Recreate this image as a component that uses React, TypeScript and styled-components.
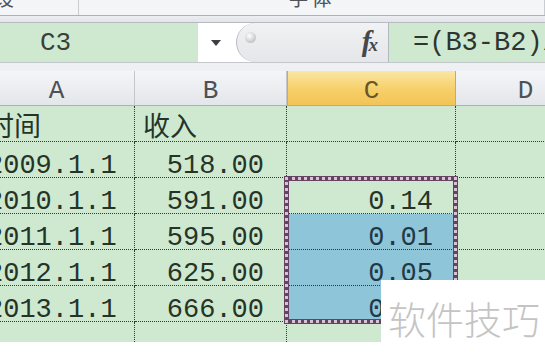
import { FC, Fragment } from "react"
import styled, { createGlobalStyle } from "styled-components"

const GlobalStyle = createGlobalStyle`
  html, body {
    margin: 0;
    padding: 0;
    background: #ffffff;
    overflow: hidden;
  }
  body {
    font-family: "Liberation Mono", "Noto Sans CJK SC", monospace;
  }
`

const GREEN = "#cfe9d1"
const BLUE = "#8fc5d9"
const GRID_LINE = "#2f3a33"
const MONO = `"Liberation Mono", "Noto Sans CJK SC", monospace`

const Page = styled.div`
  position: relative;
  width: 545px;
  height: 361px;
  overflow: hidden;
  background: #ffffff;
`

const Ribbon = styled.div`
  display: flex;
  height: 15px;
  background: #f4f5f7;
  border-bottom: 1px solid #aeb2b8;
  overflow: hidden;
`

const RibbonGroup = styled.div<{ $width?: number; $align?: string }>`
  display: flex;
  align-items: flex-end;
  justify-content: ${(p) => p.$align || "center"};
  width: ${(p) => (p.$width ? `${p.$width}px` : "auto")};
  flex: ${(p) => (p.$width ? "none" : "1")};
  border-right: 1px solid #c9ccd1;
  padding-bottom: 7px;
  font-family: "Noto Sans CJK SC", sans-serif;
  font-size: 20px;
  line-height: 20px;
  color: #4f5358;
`

const RibbonLabel = styled.span<{ $shift?: number }>`
  margin-left: ${(p) => p.$shift || 0}px;
  letter-spacing: 3px;
`

const Band = styled.div`
  height: 6px;
  background: linear-gradient(#eceef1, #e2e5e9);
  border-bottom: 1px solid #b7bbc1;
`

const FormulaBar = styled.div`
  display: flex;
  height: 39px;
  border-bottom: 1px solid #c4c8cd;
`

const NameBox = styled.div`
  display: flex;
  align-items: center;
  width: 198px;
  padding-left: 40px;
  box-sizing: border-box;
  background: ${GREEN};
  font-family: ${MONO};
  font-size: 26px;
  color: #3a3f3b;
`

const DropZone = styled.div`
  display: flex;
  align-items: center;
  justify-content: center;
  width: 38px;
  background: #ffffff;
`

const Caret = styled.div`
  width: 0;
  height: 0;
  border-left: 5px solid transparent;
  border-right: 5px solid transparent;
  border-top: 6px solid #3b3f44;
  margin-right: 2px;
`

const FxPill = styled.div`
  position: relative;
  display: flex;
  align-items: center;
  justify-content: flex-end;
  width: 152px;
  padding-right: 10px;
  box-sizing: border-box;
  background: linear-gradient(#f1f2f4, #e4e6e9);
  border-left: 1px solid #b9bdc3;
  border-radius: 22px 0 0 22px;
`

const Knob = styled.div`
  position: absolute;
  left: 8px;
  top: 9px;
  width: 11px;
  height: 11px;
  border-radius: 50%;
  background: radial-gradient(circle at 40% 35%, #ffffff, #c3c6ca 70%);
`

const FxLabel = styled.span`
  font-family: "Liberation Serif", serif;
  font-style: italic;
  font-weight: bold;
  font-size: 29px;
  line-height: 29px;
  color: #44474c;
  & small {
    font-size: 19px;
    margin-left: -3px;
  }
`

const FormulaText = styled.div`
  flex: 1;
  display: flex;
  align-items: center;
  padding-left: 24px;
  background: ${GREEN};
  border-left: 1px solid #b3b8be;
  font-family: ${MONO};
  font-size: 27px;
  color: #2e3430;
  white-space: nowrap;
  overflow: hidden;
`

const Gap = styled.div`
  height: 8px;
  background: #eef0f3;
`

const Sheet = styled.div`
  position: relative;
  height: 271px;
  overflow: hidden;
`

const Grid = styled.div`
  display: grid;
  grid-template-columns: 156px 152px 169px 140px;
  grid-template-rows: 35px;
  grid-auto-rows: 36px;
  margin-left: -21px;
`

const HeadCell = styled.div<{ $active?: boolean }>`
  display: flex;
  align-items: center;
  justify-content: center;
  padding-top: 5px;
  box-sizing: border-box;
  font-family: ${MONO};
  font-size: 26px;
  color: ${(p) => (p.$active ? "#6a5626" : "#4d5156")};
  background: ${(p) =>
    p.$active
      ? "linear-gradient(#fbe6a4, #f6cf68 55%, #f3c457)"
      : "linear-gradient(#f4f5f7, #e3e6ea)"};
  border-right: 1px solid ${(p) => (p.$active ? "#d9a845" : "#c3c7cd")};
  border-left: ${(p) => (p.$active ? "1px solid #d9a845" : "none")};
  border-bottom: 1px solid ${(p) => (p.$active ? "#d9a845" : "#aab0b7")};
`

const Cell = styled.div<{ $align?: "left" | "right"; $tone?: "green" | "blue"; $cjk?: boolean }>`
  display: flex;
  align-items: flex-end;
  justify-content: ${(p) => (p.$align === "right" ? "flex-end" : "flex-start")};
  padding: 0 22px ${(p) => (p.$cjk ? "3px" : "0")} 8px;
  box-sizing: border-box;
  background: ${(p) => (p.$tone === "blue" ? BLUE : GREEN)};
  border-right: 1px dotted ${GRID_LINE};
  border-bottom: 1px dotted ${GRID_LINE};
  font-family: ${(p) => (p.$cjk ? `"Noto Sans CJK SC", sans-serif` : MONO)};
  font-size: 27px;
  line-height: ${(p) => (p.$cjk ? "26px" : "22px")};
  color: ${(p) => (p.$tone === "blue" ? "#1f3946" : "#263428")};
  white-space: nowrap;
`

const Marquee = styled.div`
  position: absolute;
  left: 284px;
  top: 105px;
  width: 174px;
  height: 148px;
  box-sizing: border-box;
  border: 5px solid #654463;
  pointer-events: none;
  &::after {
    content: "";
    position: absolute;
    inset: -4px;
    border: 3px dotted #d7c3d4;
  }
`

const Watermark = styled.div`
  position: absolute;
  left: 381px;
  top: 280px;
  width: 164px;
  height: 81px;
  padding: 16px 0 0 7px;
  box-sizing: border-box;
  background: #ffffff;
  font-family: "Noto Sans CJK SC", sans-serif;
  font-weight: 300;
  font-size: 38px;
  line-height: 44px;
  color: #c4c4c4;
  white-space: nowrap;
`

type Row = {
  a: string
  b: string
  c: string
  tone?: "green" | "blue"
  cjk?: boolean
}

const rows: Row[] = [
  { a: "时间", b: "收入", c: "", cjk: true },
  { a: "2009.1.1", b: "518.00", c: "" },
  { a: "2010.1.1", b: "591.00", c: "0.14" },
  { a: "2011.1.1", b: "595.00", c: "0.01", tone: "blue" },
  { a: "2012.1.1", b: "625.00", c: "0.05", tone: "blue" },
  { a: "2013.1.1", b: "666.00", c: "0.07", tone: "blue" },
  { a: "", b: "", c: "" },
]

const columns = ["A", "B", "C", "D"]

const App: FC = () => {
  return (
    <Page>
      <GlobalStyle />
      <Ribbon>
        <RibbonGroup $width={78} $align="flex-start">
          <RibbonLabel $shift={-6}>设</RibbonLabel>
        </RibbonGroup>
        <RibbonGroup>
          <RibbonLabel>字体</RibbonLabel>
        </RibbonGroup>
      </Ribbon>
      <Band />
      <FormulaBar>
        <NameBox>C3</NameBox>
        <DropZone>
          <Caret />
        </DropZone>
        <FxPill>
          <Knob />
          <FxLabel>
            f<small>x</small>
          </FxLabel>
        </FxPill>
        <FormulaText>=(B3-B2)/B2</FormulaText>
      </FormulaBar>
      <Gap />
      <Sheet>
        <Grid>
          {columns.map((col) => (
            <HeadCell key={col} $active={col === "C"}>
              {col}
            </HeadCell>
          ))}
          {rows.map((row, i) => (
            <Fragment key={i}>
              <Cell $cjk={row.cjk}>{row.a}</Cell>
              <Cell $cjk={row.cjk} $align={row.cjk ? "left" : "right"}>
                {row.b}
              </Cell>
              <Cell $align="right" $tone={row.tone}>
                {row.c}
              </Cell>
              <Cell />
            </Fragment>
          ))}
        </Grid>
        <Marquee />
      </Sheet>
      <Watermark>软件技巧</Watermark>
    </Page>
  )
}

export default App
